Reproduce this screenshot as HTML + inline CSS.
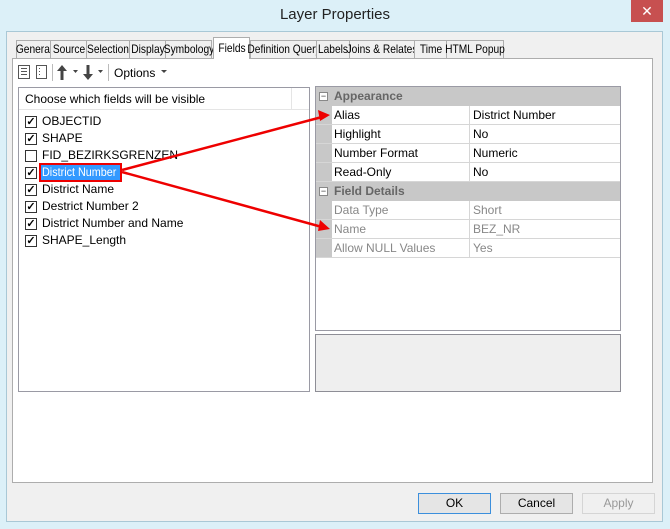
<!DOCTYPE html>
<html><head><style>
*{box-sizing:border-box;margin:0;padding:0}
body{width:670px;height:529px;background:#dcf0f8;font-family:"Liberation Sans",sans-serif;font-size:12px;color:#000;position:relative;overflow:hidden}
.abs{position:absolute}
.title{left:0;top:6px;width:670px;text-align:center;font-size:15px;color:#222}
.close{left:631px;top:0;width:32px;height:22px;background:#c75050;color:#fff;text-align:center;font-size:14px;line-height:22px}
.inner{left:6px;top:31px;width:657px;height:491px;background:#f0f0f0;border:1px solid #a9c8d6}
.panel{left:12px;top:58px;width:641px;height:425px;background:#fff;border:1px solid #adadad}
.tab{top:40px;height:19px;background:#f0f0f0;border:1px solid #adadad;font-size:12px;line-height:17px;color:#000;white-space:nowrap}
.tab span{position:absolute;left:50%;top:0;transform:translateX(-50%) scaleX(0.85)}
.tab.sel{top:37px;height:22px;background:#fff;border-bottom:none}
.tab.sel span{top:2px}
.list{left:18px;top:87px;width:292px;height:305px;border:1px solid #9a9aa4;background:#fff}
.row{position:absolute;left:6px;height:17px;line-height:17px;font-size:12px;white-space:nowrap}
.cb{position:absolute;left:0;top:3px;width:12px;height:12px;border:1px solid #333;font-size:11px;line-height:10px;text-align:center;font-weight:bold}
.tx{position:absolute;left:17px;top:0}
.grid{left:315px;top:86px;width:306px;height:245px;border:1px solid #9a9aa4;background:#fff}
.g{position:absolute;left:0;width:304px;height:19px;line-height:18px}
.cat{background:#c8c8c8;font-weight:bold;color:#666}
.pr{border-bottom:1px solid #d6d6d6}
.pr .k{position:absolute;left:16px;width:138px;padding-left:2px;height:18px;border-right:1px solid #d6d6d6}
.pr .v{position:absolute;left:157px}
.gut{position:absolute;left:0;top:0;width:16px;height:171px;background:#c8c8c8}
.desc{left:315px;top:334px;width:306px;height:58px;border:1px solid #8e8e96;background:#efefef}
.btn{top:493px;width:73px;height:21px;border:1px solid #adadad;background:#e5e5e5;text-align:center;line-height:19px}
.minus{position:absolute;left:3px;top:5px;width:9px;height:9px;border:1px solid #888;background:#fff;font-size:9px;line-height:6px;text-align:center;color:#333;font-weight:normal}
</style></head><body>
<div class="abs title">Layer Properties</div>
<div class="abs close">✕</div>
<div class="abs inner"></div>
<div class="abs panel"></div>
<div class="abs tab" style="left:16px;width:35px"><span>General</span></div>
<div class="abs tab" style="left:50px;width:37px"><span>Source</span></div>
<div class="abs tab" style="left:86px;width:44px"><span>Selection</span></div>
<div class="abs tab" style="left:129px;width:37px"><span>Display</span></div>
<div class="abs tab" style="left:165px;width:47px"><span>Symbology</span></div>
<div class="abs tab sel" style="left:213px;width:37px"><span>Fields</span></div>
<div class="abs tab" style="left:250px;width:67px"><span>Definition Query</span></div>
<div class="abs tab" style="left:316px;width:34px"><span>Labels</span></div>
<div class="abs tab" style="left:349px;width:66px"><span>Joins &amp; Relates</span></div>
<div class="abs tab" style="left:414px;width:33px"><span>Time</span></div>
<div class="abs tab" style="left:446px;width:58px"><span>HTML Popup</span></div>
<svg class="abs" style="left:0;top:62px" width="220" height="20">
<rect x="18.5" y="3.5" width="11" height="13" fill="#fff" stroke="#555"/><path d="M21 6.5h6M21 9.5h6M21 12.5h6" stroke="#555"/>
<rect x="36.5" y="3.5" width="10" height="13" fill="#fff" stroke="#555"/><path d="M39 6.5h1M39 9.5h1M39 12.5h1" stroke="#555"/>
<path d="M52.5 2v17" stroke="#bbb"/>
<path d="M62 3l-5 6h3.5v9h3v-9h3.5z" fill="#444"/>
<path d="M73 8h5l-2.5 3z" fill="#444"/>
<path d="M88 18l-5-6h3.5v-9h3v9h3.5z" fill="#444"/>
<path d="M98 8h5l-2.5 3z" fill="#444"/>
<path d="M108.5 2v17" stroke="#bbb"/>
<text x="114" y="15" font-family="Liberation Sans" font-size="12">Options</text>
<path d="M161 8h6l-3 3z" fill="#444"/>
</svg>
<div class="abs list">
<div style="position:absolute;left:0;top:0;width:290px;height:22px;border-bottom:1px solid #e5e5e5;line-height:22px;padding-left:6px">Choose which fields will be visible</div>
<div style="position:absolute;left:272px;top:0;width:1px;height:22px;background:#e5e5e5"></div>
<div class="row" style="top:25px"><span class="cb">✓</span><span class="tx">OBJECTID</span></div>
<div class="row" style="top:42px"><span class="cb">✓</span><span class="tx">SHAPE</span></div>
<div class="row" style="top:59px"><span class="cb"></span><span class="tx">FID_BEZIRKSGRENZEN</span></div>
<div class="row" style="top:76px"><span class="cb">✓</span></div>
<div class="row" style="top:93px"><span class="cb">✓</span><span class="tx">District Name</span></div>
<div class="row" style="top:110px"><span class="cb">✓</span><span class="tx">Destrict Number 2</span></div>
<div class="row" style="top:127px"><span class="cb">✓</span><span class="tx">District Number and Name</span></div>
<div class="row" style="top:144px"><span class="cb">✓</span><span class="tx">SHAPE_Length</span></div>
</div>
<div class="abs" style="left:39px;top:163px;width:83px;height:19px;border:2px solid #e00;background:#3399ff;color:#fff;line-height:15px;white-space:nowrap;overflow:hidden"><span style="display:inline-block;transform:scaleX(0.9);transform-origin:left;margin-left:1px">District Number</span></div>
<div class="abs grid">
<div class="gut"></div>
<div class="g cat" style="top:0"><span class="minus">−</span><span style="margin-left:18px">Appearance</span></div>
<div class="g pr" style="top:19px"><span class="k">Alias</span><span class="v">District Number</span></div>
<div class="g pr" style="top:38px"><span class="k">Highlight</span><span class="v">No</span></div>
<div class="g pr" style="top:57px"><span class="k">Number Format</span><span class="v">Numeric</span></div>
<div class="g pr" style="top:76px"><span class="k">Read-Only</span><span class="v">No</span></div>
<div class="g cat" style="top:95px"><span class="minus">−</span><span style="margin-left:18px">Field Details</span></div>
<div class="g pr" style="top:114px;color:#888"><span class="k">Data Type</span><span class="v">Short</span></div>
<div class="g pr" style="top:133px;color:#888"><span class="k">Name</span><span class="v">BEZ_NR</span></div>
<div class="g pr" style="top:152px;color:#888"><span class="k">Allow NULL Values</span><span class="v">Yes</span></div>
</div>
<div class="abs desc"></div>
<svg class="abs" style="left:0;top:0" width="670" height="529">
<path d="M122 170L322 117M122 172L322 227" stroke="#e00" stroke-width="2.5"/>
<path d="M330 115l-12-5 2 11z M330 229l-10-9-2 11z" fill="#e00"/>
</svg>
<div class="abs btn" style="left:418px;border-color:#3c8fdc">OK</div>
<div class="abs btn" style="left:500px">Cancel</div>
<div class="abs btn" style="left:582px;background:#f0f0f0;border-color:#d5d5d5;color:#999">Apply</div>
</body></html>
